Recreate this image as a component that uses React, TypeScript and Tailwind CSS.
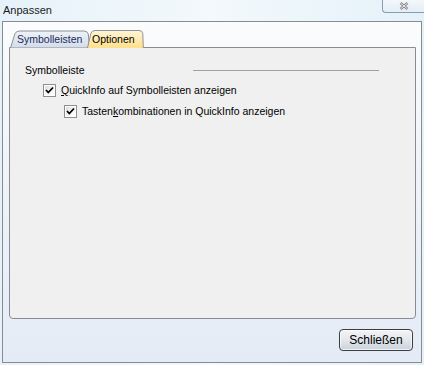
import React from "react";

const font = { fontFamily: '"Liberation Sans", Arial, sans-serif' };

function Check({ checked }: { checked: boolean }) {
  return (
    <div className="w-[13px] h-[13px] border border-[#8e8f8f] bg-white p-px shrink-0">
      <div className="w-full h-full bg-gradient-to-br from-[#dcdcdc] via-[#f4f4f4] to-white flex items-center justify-center">
        {checked && (
          <svg width="9" height="9" viewBox="0 0 9 9">
            <path d="M1 4 L3.3 6.5 L8 1.5" stroke="#000" strokeWidth="1.8" fill="none" />
          </svg>
        )}
      </div>
    </div>
  );
}

export default function App() {
  return (
    <div
      className="w-[424px] h-[365px] relative overflow-hidden bg-gradient-to-r from-[#e6f2f9] via-[#f3f9fc] to-[#e4f1f9] text-[10.5px] text-black"
      style={font}
    >
      {/* title bar */}
      <div className="h-[21px] flex items-start pl-[3px] pt-[2px] text-[11px] text-[#1a1a1a]">
        Anpassen
      </div>
      <div className="absolute top-0 right-0 w-[42px] h-[13px] border border-t-0 border-r-0 border-[#8b9bb0] rounded-bl-[4px] bg-gradient-to-b from-[#f2f8fc] to-[#e3eef7] flex items-center justify-center">
        <svg width="10" height="8" viewBox="0 0 10 8">
          <path d="M1.5 1 L8.5 7 M8.5 1 L1.5 7" stroke="#8a8a8a" strokeWidth="2.6" fill="none" />
          <path d="M1.5 1 L8.5 7 M8.5 1 L1.5 7" stroke="#f0f0f0" strokeWidth="0.9" fill="none" />
        </svg>
      </div>

      {/* client area */}
      <div className="ml-[2px] w-[420px] h-[342px] border border-[#878c90] bg-gradient-to-b from-[#fafcfd] to-[#e4ebf6] flex flex-col">
        <div className="pl-[6px] pr-[5px] pt-[8px]">
          {/* tabs */}
          <div className="flex h-[17px] pl-[1px] relative z-10">
            <div className="relative w-[80px] h-[17px]">
              <svg className="absolute inset-0" width="80" height="18" viewBox="0 0 80 18">
                <defs>
                  <linearGradient id="t1" x1="0" y1="0" x2="0" y2="1">
                    <stop offset="0" stopColor="#eef2f8" />
                    <stop offset="1" stopColor="#d3dce9" />
                  </linearGradient>
                </defs>
                <path d="M0.5 18 L4.8 4 Q6 1 9.5 1 L74 1 Q77.5 1 78.3 4 L79.5 18 Z" fill="url(#t1)" stroke="#8c919b" strokeWidth="1" />
              </svg>
              <span className="absolute left-[7px] top-[3px] text-[#1b2a5c] leading-[12px]">Symbolleisten</span>
            </div>
            <div className="relative w-[57px] h-[17px] -ml-[3px]">
              <svg className="absolute inset-0" width="57" height="18" viewBox="0 0 57 18">
                <defs>
                  <linearGradient id="t2" x1="0" y1="0" x2="0" y2="1">
                    <stop offset="0" stopColor="#fff6d6" />
                    <stop offset="1" stopColor="#ffdf8a" />
                  </linearGradient>
                </defs>
                <path d="M0.5 18 L3.8 3.5 Q4.8 0.5 8 0.5 L52 0.5 Q55.5 0.5 55.8 3.5 L56.3 18" fill="url(#t2)" stroke="#8c919b" strokeWidth="1" />
              </svg>
              <span className="absolute left-[5px] top-[3px] leading-[12px]">Optionen</span>
            </div>
          </div>

          {/* panel */}
          <div className="h-[272px] border border-[#898c95] rounded-bl-[4px] rounded-br-[4px] bg-[#f0f0f0] pl-[15px] pt-[16px]">
            <div className="flex items-center h-[13px]">
              <span className="leading-[13px]">Symbolleiste</span>
              <div className="ml-[108px] w-[186px] h-px bg-[#a0a0a0]" />
            </div>
            <div className="flex items-center gap-[5px] mt-[7px] ml-[18px] h-[13px]">
              <Check checked />
              <span className="leading-[13px]">
                <span className="underline underline-offset-[1px]">Q</span>uickInfo auf Symbolleisten anzeigen
              </span>
            </div>
            <div className="flex items-center gap-[5px] mt-[8px] ml-[39px] h-[13px]">
              <Check checked />
              <span className="leading-[13px]">
                Tasten<span className="underline underline-offset-[1px]">k</span>ombinationen in QuickInfo anzeigen
              </span>
            </div>
          </div>
        </div>

        {/* button row */}
        <div className="flex justify-end pr-[8px] mt-[10px]">
          <button
            className="w-[74px] h-[22px] rounded-[4px] border border-[#3d3d3d] bg-gradient-to-b from-[#f3f4f6] via-[#e3e7ec] to-[#c8d2de] text-[12px] leading-[20px] text-black shadow-[inset_0_0_0_1px_rgba(255,255,255,0.7)]"
            style={font}
          >
            Schließen
          </button>
        </div>
      </div>
    </div>
  );
}
